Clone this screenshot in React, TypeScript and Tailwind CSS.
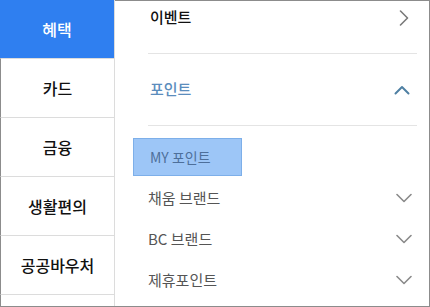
import React from "react";

const sideMenu = ["혜택", "카드", "금융", "생활편의", "공공바우처"];
const subMenu = ["MY 포인트", "채움 브랜드", "BC 브랜드", "제휴포인트"];

function ChevronRight() {
  return (
    <svg width="10" height="16" viewBox="0 0 10 16" fill="none">
      <polyline points="1.5,1 8.5,8 1.5,15" stroke="#7a7a7a" strokeWidth="1.6" strokeLinecap="round" strokeLinejoin="round" />
    </svg>
  );
}

function ChevronUp() {
  return (
    <svg width="16" height="10" viewBox="0 0 16 10" fill="none">
      <polyline points="1.5,8.5 8,2 14.5,8.5" stroke="#4f80a3" strokeWidth="2" strokeLinecap="round" strokeLinejoin="round" />
    </svg>
  );
}

function ChevronDown() {
  return (
    <svg width="16" height="10" viewBox="0 0 16 10" fill="none">
      <polyline points="1,1.5 8,8.5 15,1.5" stroke="#8a8a8a" strokeWidth="1.6" strokeLinecap="round" strokeLinejoin="round" />
    </svg>
  );
}

export default function App() {
  return (
    <div className="w-[430px] h-[307px] flex bg-white border-r border-b border-[#8c8c8c] overflow-hidden font-['Noto_Sans_CJK_KR','Noto_Sans',sans-serif]">
      {/* Side menu */}
      <div className="w-[115px] shrink-0 flex flex-col border-r border-[#dcdcdc]">
        {sideMenu.map((label, i) => (
          <div
            key={label}
            className={
              i === 0
                ? "h-[58px] flex items-center justify-center bg-[#2f7ff0] text-white text-[16px] font-medium"
                : "h-[59px] flex items-center justify-center border-l border-[#8c8c8c] border-t border-t-[#dcdcdc] text-[#111] text-[16px] font-medium"
            }
          >
            {label}
          </div>
        ))}
        <div className="flex-1 border-l border-[#8c8c8c] border-t border-t-[#dcdcdc]" />
      </div>

      {/* Content */}
      <div className="flex-1 border-t border-[#8c8c8c] overflow-hidden">
        <div className="mt-[-19px]">
          <div className="h-[72px] ml-[33px] mr-[12px] pl-[2px] pr-[8px] flex items-center justify-between border-b border-[#e4e4e4]">
            <span className="text-[15px] font-medium text-[#111]">이벤트</span>
            <ChevronRight />
          </div>
          <div className="h-[72px] ml-[33px] mr-[12px] pl-[2px] pr-[7px] flex items-center justify-between border-b border-[#e4e4e4]">
            <span className="text-[15px] font-medium text-[#5b8dbd]">포인트</span>
            <ChevronUp />
          </div>
          <div className="pt-3 ml-[18px] mr-[17px]">
            {subMenu.map((label, i) => (
              <div key={label} className="h-[41px] flex items-start justify-between">
                {i === 0 ? (
                  <div className="h-[38px] w-[109px] pl-[16px] flex items-center bg-[#9dc6f7] border border-[#7dafe9] text-[14px] text-[#4d6f9a]">
                    {label}
                  </div>
                ) : (
                  <>
                    <div className="h-[38px] pl-[15px] flex items-center text-[15px] text-[#555]">{label}</div>
                    <div className="h-[38px] flex items-center">
                      <ChevronDown />
                    </div>
                  </>
                )}
              </div>
            ))}
          </div>
        </div>
      </div>
    </div>
  );
}
